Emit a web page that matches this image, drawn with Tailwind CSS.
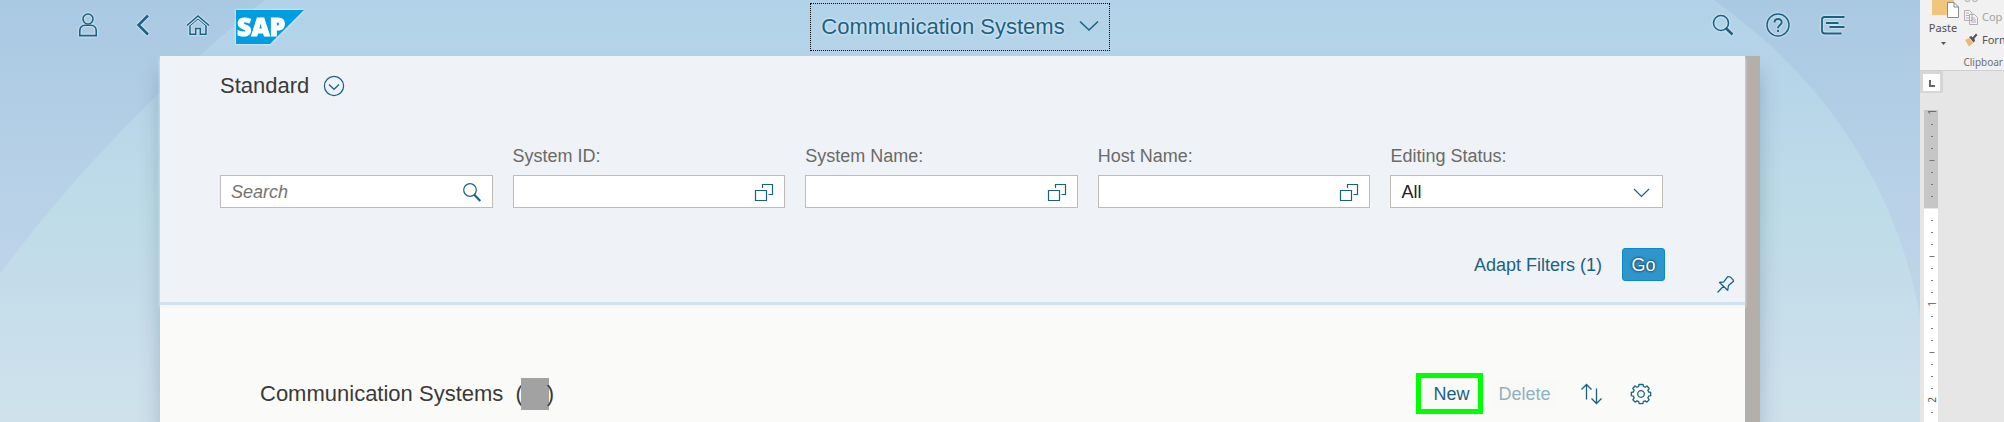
<!DOCTYPE html>
<html lang="en">
<head>
<meta charset="utf-8">
<title>Communication Systems</title>
<script src="https://cdn.jsdelivr.net/npm/@tailwindcss/browser@4"></script>
</head>
<body class="flex min-h-screen overflow-hidden bg-[#e6e6e6] font-['Liberation_Sans',Arial,sans-serif]">

<!-- Launchpad window -->
<div class="relative isolate flex min-w-0 flex-1 flex-col overflow-hidden bg-linear-to-b from-[#a9c9e2] via-[#b9d2e8] to-[#c8d6ea]">
  <svg class="absolute inset-0 -z-10 size-full" viewBox="0 0 1920 422" preserveAspectRatio="none" aria-hidden="true">
    <defs>
      <linearGradient id="sky" x1="0" y1="0" x2="0" y2="1">
        <stop offset="0" stop-color="#b1d2e8"/>
        <stop offset=".2" stop-color="#b7d5e8"/>
        <stop offset=".5" stop-color="#bedce8"/>
        <stop offset=".66" stop-color="#c4dcea"/>
        <stop offset="1" stop-color="#cfe2ec"/>
      </linearGradient>
    </defs>
    <path d="M265 0C180 68 80 165 0 274V422H1920V316C1895 180 1820 75 1714 0Z" fill="url(#sky)"/>
  </svg>

  <header class="grid h-14 shrink-0 grid-cols-[1fr_auto_1fr] items-center px-[60px] pb-[2px] text-[#1a6283]">
    <nav class="flex items-center [&_svg]:drop-shadow-[0_0_1px_#fff]" aria-label="Shell">
      <button class="flex w-[55px] justify-center pb-1" aria-label="User">
        <svg class="size-6" viewBox="0 0 24 24" fill="none" stroke="currentColor" stroke-width="1.6"><circle cx="12" cy="6" r="5"/><path d="M3.8 22.6V17.5C3.8 14.500 6 12.200 9 12.200H15C18 12.200 20.200 14.500 20.200 17.500V22.600Z"/></svg>
      </button>
      <button class="flex w-[55px] justify-center pb-1" aria-label="Back">
        <svg class="size-6" viewBox="0 0 24 24" fill="none" stroke="currentColor" stroke-width="2.5"><path d="M17 2.500L7.500 12L17 21.500"/></svg>
      </button>
      <button class="flex w-[55px] justify-center pb-1" aria-label="Home">
        <svg class="size-6" viewBox="0 0 24 24" fill="none" stroke="currentColor" stroke-width="1.500"><path d="M1 12.500L12 3L23 12.500M4 12.500V21.300H9.700V15.500H14.300V21.300H20V12.500"/><path stroke-width="1" d="M4 12.800L12 6L20 12.800"/></svg>
      </button>
      <a href="#" class="ml-[11px] flex" aria-label="SAP home">
        <svg class="h-[34px] w-[68px]" viewBox="0 0 68 34"><path d="M0 0H68L34 34H0Z" fill="#009de0"/><text x="1" y="26" fill="#fff" stroke="#fff" stroke-width="1" font-family="Open Sans" font-weight="800" font-size="25">SAP</text></svg>
      </a>
    </nav>
    <button class="flex h-12 items-center gap-[14px] border border-dotted border-black px-[10px] text-[22px] [text-shadow:0_0_3px_#fff]">
      <span class="pb-[2px]">Communication Systems</span>
      <svg class="mb-[2px] h-3 w-5" viewBox="0 0 20 12" fill="none" stroke="currentColor" stroke-width="1.600"><path d="M1 1.500L10 10L19 1.500"/></svg>
    </button>
    <div class="flex items-center justify-end [&_svg]:drop-shadow-[0_0_1px_#fff]">
      <button class="flex w-[55px] justify-center pb-1" aria-label="Search">
        <svg class="size-6" viewBox="0 0 24 24" fill="none" stroke="currentColor" stroke-width="1.600"><circle cx="10" cy="10" r="7.500"/><path stroke-width="2.600" d="M14.500 14.800L21.500 21.500"/></svg>
      </button>
      <button class="flex w-[55px] justify-center pb-1" aria-label="Help">
        <svg class="size-6" viewBox="0 0 24 24" fill="none" stroke="currentColor" stroke-width="1.500"><circle cx="12" cy="12" r="11"/><path stroke-width="1.900" d="M8.500 9.500C8.500 4.800 15.700 4.800 15.700 9.200C15.700 12 12 12 12 15.200M12 16.700V19"/></svg>
      </button>
      <button class="flex w-[55px] justify-center pb-1" aria-label="Notifications">
        <svg class="size-6" viewBox="0 0 24 24" fill="none" stroke="currentColor" stroke-width="1.800"><path d="M23.500 4H3.500Q1 4 1 6.500V17.500Q1 20.500 4 20.500H20.500M5 10H17.500M8.500 14H23.500"/></svg>
      </button>
    </div>
  </header>

  <main class="mx-auto flex w-10/12 flex-1 border-r-[15px] border-[#b4b0a9] bg-[#fafaf8] shadow-[0_16px_20px_rgba(0,40,70,0.22)]">
    <div class="flex min-w-0 flex-1 flex-col">
      <section class="border-b-[3px] border-[#d0e3ee] bg-[#eff3f8] pt-4 pl-[60px] shadow-[0_2px_3px_#eff3f8]" aria-label="Filter bar">
        <div class="flex items-center gap-[14px] text-[22px] leading-7 text-[#3a3a38]">
          <h1>Standard</h1>
          <button class="text-[#1a6283]" aria-label="Select view">
            <svg class="size-[22px]" viewBox="0 0 22 22" fill="none" stroke="currentColor" stroke-width="1.200"><circle cx="11" cy="11" r="9.600"/><path d="M6 9.500L11 14.300L16 9.500"/></svg>
          </button>
        </div>

        <form class="mt-11 mr-[82px] grid grid-cols-5 items-end gap-5 text-lg leading-6 text-[#6a6a66]">
          <div class="flex h-[33px] items-center border border-[#bfbbb5] bg-white pr-[10px] pl-[10px]">
            <input class="min-w-0 flex-1 italic outline-none placeholder:text-[#74746e]" type="search" placeholder="Search" aria-label="Search">
            <button type="button" class="text-[#1a6283]" aria-label="Start search"><svg class="size-5" viewBox="0 0 20 20" fill="none" stroke="currentColor" stroke-width="1.200"><circle cx="8" cy="8" r="6.300"/><path stroke-width="2.200" d="M12.300 12.800L18.300 19"/></svg></button>
          </div>
          <div class="flex flex-col gap-[7px]">
            <label for="system-id">System ID:</label>
            <div class="flex h-[33px] items-center border border-[#bfbbb5] bg-white pr-[10px] pl-[10px]">
              <input id="system-id" class="min-w-0 flex-1 outline-none" type="text">
              <button type="button" class="text-[#1a6283]" aria-label="System ID value help"><svg class="size-5" viewBox="0 0 20 20" fill="none" stroke="currentColor" stroke-width="1.200"><path d="M1.500 8.500H12.500V18.500H1.500ZM8.500 6V2.500H18.500V12.500H14.500"/></svg></button>
            </div>
          </div>
          <div class="flex flex-col gap-[7px]">
            <label for="system-name">System Name:</label>
            <div class="flex h-[33px] items-center border border-[#bfbbb5] bg-white pr-[10px] pl-[10px]">
              <input id="system-name" class="min-w-0 flex-1 outline-none" type="text">
              <button type="button" class="text-[#1a6283]" aria-label="System name value help"><svg class="size-5" viewBox="0 0 20 20" fill="none" stroke="currentColor" stroke-width="1.200"><path d="M1.500 8.500H12.500V18.500H1.500ZM8.500 6V2.500H18.500V12.500H14.500"/></svg></button>
            </div>
          </div>
          <div class="flex flex-col gap-[7px]">
            <label for="host-name">Host Name:</label>
            <div class="flex h-[33px] items-center border border-[#bfbbb5] bg-white pr-[10px] pl-[10px]">
              <input id="host-name" class="min-w-0 flex-1 outline-none" type="text">
              <button type="button" class="text-[#1a6283]" aria-label="Host name value help"><svg class="size-5" viewBox="0 0 20 20" fill="none" stroke="currentColor" stroke-width="1.200"><path d="M1.500 8.500H12.500V18.500H1.500ZM8.500 6V2.500H18.500V12.500H14.500"/></svg></button>
            </div>
          </div>
          <div class="flex flex-col gap-[7px]">
            <label for="editing-status">Editing Status:</label>
            <div class="relative flex h-[33px] border border-[#bfbbb5] bg-white">
              <select id="editing-status" class="w-full appearance-none bg-transparent pl-[10px] text-[#222] outline-none"><option>All</option></select>
              <svg class="pointer-events-none absolute top-3 right-3 h-[10px] w-[18px] text-[#1a6283]" viewBox="0 0 18 10" fill="none" stroke="currentColor" stroke-width="1.200"><path d="M2 1L9.500 8.500L17 1"/></svg>
            </div>
          </div>
        </form>

        <div class="mt-10 mr-20 flex items-center justify-end gap-5 text-lg leading-6 text-[#1a6283]">
          <button>Adapt Filters (1)</button>
          <button class="h-[33px] w-[43px] rounded-[3px] border border-[#0a8ac8] bg-[#2f96cd] text-white [text-shadow:0_0_3px_#000]">Go</button>
        </div>
        <div class="-mt-[6px] mr-[10px] mb-2 flex justify-end text-[#1a6283]">
          <button aria-label="Pin header"><svg class="size-[19px]" viewBox="0 0 19 19" fill="none" stroke="currentColor" stroke-width="1.300" stroke-linejoin="round"><path d="M1.500 17.500L7.500 11.300M3.500 7.500L7.800 6.800L11.500 1.800Q14 1.200 15.500 3.200Q17.800 4.500 17.500 6.300L12.500 10.500L11.700 15.300Z"/></svg></button>
        </div>
      </section>

      <section class="flex flex-1 items-start justify-between pt-[68px] pr-[88px] pl-[100px]" aria-label="Communication systems table">
        <h2 class="flex h-[41px] items-center text-[22px] text-[#3a3a38]">Communication Systems&nbsp;&nbsp;(<span class="-mx-[2px] h-8 w-7 bg-[#a2a2a2]"></span>)</h2>
        <div class="flex h-[41px] items-center text-lg text-[#1a6283]">
          <button class="h-[41px] w-[67px] border-5 border-[#00ff00] pl-[4px]">New</button>
          <button class="ml-2 h-7 w-[67px] bg-[#f9f9f8] text-[#90b1c1]" disabled>Delete</button>
          <button class="ml-4 flex w-[33px] justify-center" aria-label="Sort"><svg class="size-[22px]" viewBox="0 0 22 22" fill="none" stroke="currentColor" stroke-width="1.300"><path d="M6.500 16.500V1.500M1.500 6.500L6.500 1.500L11.500 6.500M16.500 5.500V20.500M11.500 15.500L16.500 20.500L21.500 15.500"/></svg></button>
          <button class="ml-[17px] flex w-[33px] justify-center" aria-label="Settings"><svg class="size-[22px]" viewBox="-11 -11 22 22" fill="none" stroke="currentColor" stroke-width="1.300" stroke-linejoin="round"><circle r="3.300"/><path d="M-2 -9.500H2L2.500 -7.500L4.200 -6.800L6 -8L8.200 -5.500L6.900 -3.800L7.600 -2L9.700 -1.700V1.700L7.600 2.200L6.900 3.800L8.100 5.700L5.800 8.100L4 6.900L2.300 7.700L1.800 9.700H-1.800L-2.300 7.700L-4 6.900L-5.800 8.100L-8.100 5.700L-6.900 3.800L-7.600 2.200L-9.700 1.700V-1.700L-7.600 -2L-6.900 -3.800L-8.200 -5.500L-6 -8L-4.200 -6.800L-2.500 -7.500Z"/></svg></button>
        </div>
      </section>
    </div>
  </main>
</div>

<!-- Word processor window, only its left edge on screen -->
<aside class="flex w-[84px] shrink-0 flex-col overflow-hidden font-['Noto_Sans',sans-serif] text-[11px]" aria-label="Document editor">
  <div class="flex h-[71px] flex-col border-b border-[#cfcfcf] bg-[#f1f1f1]">
    <div class="flex h-[54px] shrink-0 gap-[5px] pl-[7px]">
      <button class="flex w-8 shrink-0 flex-col items-center text-[#505050]">
        <svg class="h-[18px] w-8 shrink-0" viewBox="0 0 32 18"><path d="M5 0H27V15H5Z" fill="#efc67c"/><path d="M20.500 2.500H27L31.500 7V17.500H20.500Z" fill="#fff" stroke="#8a8a8a"/><path d="M27 2.500V7H31.500" fill="none" stroke="#8a8a8a"/></svg>
        <span class="leading-5">Paste</span>
        <svg class="mt-1 h-[3px] w-[5px]" viewBox="0 0 5 3"><path d="M0 0H5L2.500 3Z" fill="#555"/></svg>
      </button>
      <div class="flex shrink-0 flex-col text-[#555]">
        <svg class="h-[6px] w-4" viewBox="0 0 16 6" fill="none" stroke="#bbb" stroke-width="1.300"><circle cx="3.500" cy="-1" r="2.500"/><circle cx="11" cy="-1" r="2.500"/></svg>
        <button class="flex h-[23px] items-center gap-1 text-[#a3a3a3]" disabled>
          <svg class="h-[15px] w-[14px]" viewBox="0 0 14 15" fill="#f5f3f5" stroke="#b5abb5"><path d="M.5 .5H5.500L8 3V10.500H.5ZM5.500 4.500H10.500L13.500 7.500V14.500H5.500ZM7 8H11M7 10H12M7 12H12M2 3H5M2 5.500H5M2 8H5"/></svg>Cop
        </button>
        <button class="flex h-[22px] items-center gap-1 whitespace-nowrap">
          <svg class="h-[14px] w-[14px]" viewBox="0 0 14 14"><path d="M1 7L5 5L9 10L5 13.500Z" fill="#ecb971"/><path d="M5 4L7.500 3L8.500 4.500L12 .5L13.500 2L10.500 5.500L11 8L9.500 9.500Z" fill="#555"/></svg>Form
        </button>
      </div>
    </div>
    <span class="pr-px text-right leading-4 text-[10px] text-[#707070]">Clipboar</span>
  </div>
  <button class="flex h-[22px] w-[23px] shrink-0 items-center justify-center bg-[#d6d6d6]" aria-label="Tab stop">
    <svg class="size-[17px] bg-[#fcfcfc]" viewBox="0 0 17 17" fill="none" stroke="#666" stroke-width="2"><path d="M7 6V12H12"/></svg>
  </button>
  <!-- Vertical ruler -->
  <div class="mt-[17px] ml-1 flex w-[14px] flex-1 flex-col overflow-hidden bg-white">
    <svg class="h-[312px] w-[14px] shrink-0" viewBox="0 0 14 312" font-family="Noto Sans" font-size="10" fill="#555" text-anchor="middle">
      <path d="M0 0H14V98H0Z" fill="#c6c6c6"/>
      <path d="M0 98.500H14" stroke="#e6e6e6"/>
      <path stroke="#777" d="M7 14.500h2M7 26.500h2M7 38.500h2M5.500 50.500h5M7 62.500h2M7 74.500h2M7 86.500h2M7 110.500h2M7 122.500h2M7 134.500h2M5.500 146.500h5M7 158.500h2M7 170.500h2M7 182.500h2M7 206.500h2M7 218.500h2M7 230.500h2M5.500 242.500h5M7 254.500h2M7 266.500h2M7 278.500h2M7 302.500h2"/>
      <text transform="translate(12 2) rotate(-90)">1</text>
      <text transform="translate(12 194) rotate(-90)">1</text>
      <text transform="translate(12 290) rotate(-90)">2</text>
    </svg>
  </div>
</aside>
</body>
</html>
